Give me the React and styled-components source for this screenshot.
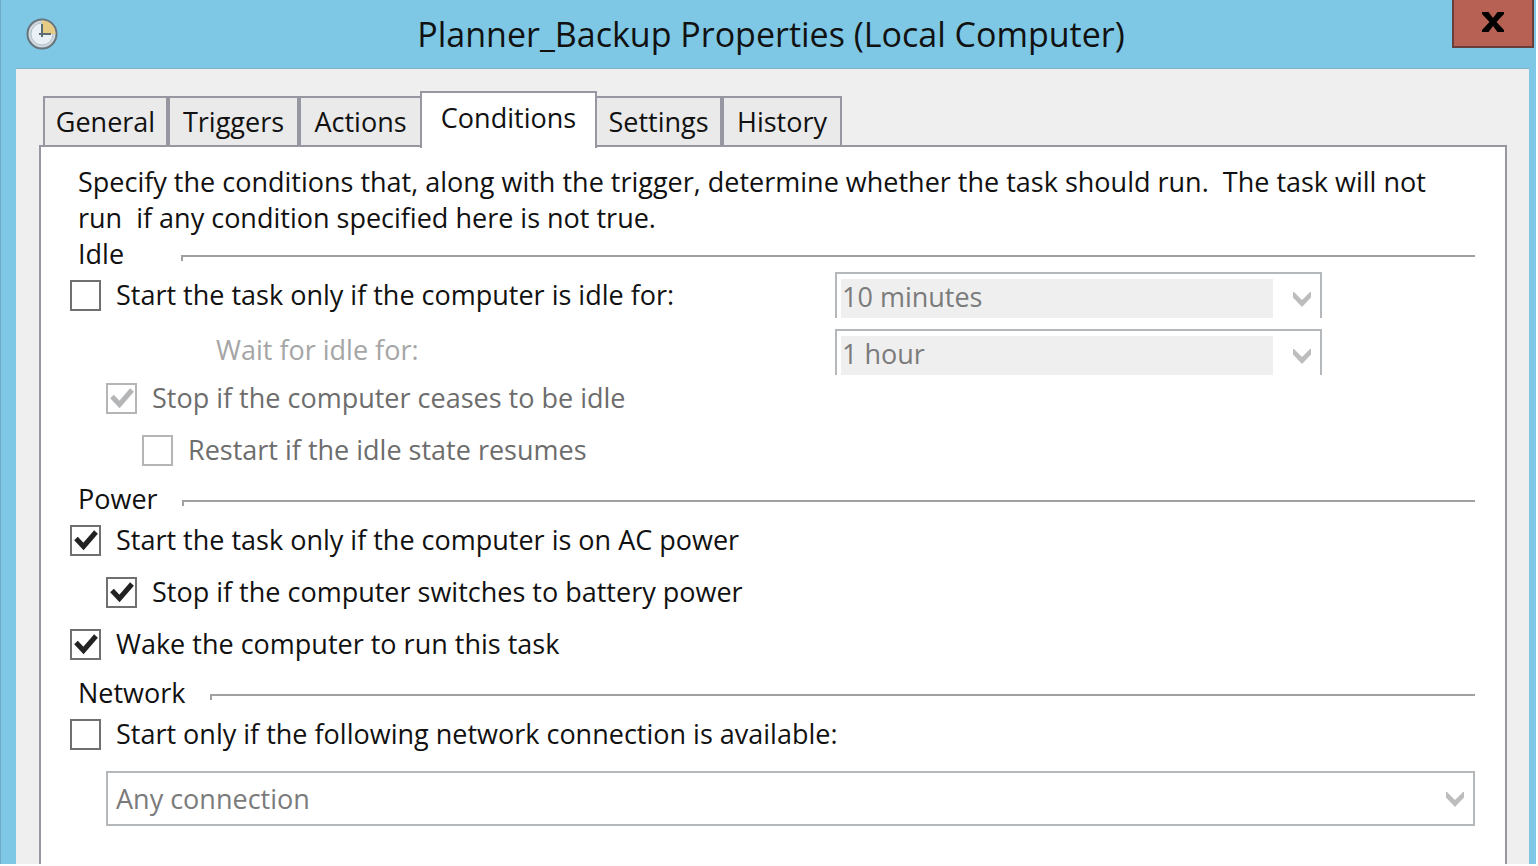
import { useState } from "react";
import styled, { createGlobalStyle } from "styled-components";

const tabs = [
    { name: "General", width: 125 },
    { name: "Triggers", width: 131 },
    { name: "Actions", width: 123 },
    { name: "Conditions", width: 177 },
    { name: "Settings", width: 127 },
    { name: "History", width: 120 },
];

function ClockIcon() {
    return (
        <svg width="32" height="32" viewBox="0 0 32 32" aria-hidden="true">
            <circle cx="16" cy="16" r="14.5" fill="#cfd8de" stroke="#68747b" strokeWidth="2" />
            <circle cx="16" cy="16" r="11" fill="#e9f1f6" stroke="#b4c0c9" strokeWidth="1" />
            <path d="M16 16V2.5A13.5 13.5 0 0 1 29.5 16Z" fill="#e6cb84" />
            <path d="M16 6V19M13 16H25" stroke="#5d6b74" strokeWidth="2" fill="none" />
        </svg>
    );
}

function CloseIcon() {
    return (
        <svg width="22" height="20" viewBox="0 0 22 20" aria-hidden="true">
            <path d="M0 0H6.500L11 6L15.500 0H22V2L14.500 10L22 18V20H15.500L11 14L6.500 20H0V18L7.500 10L0 2Z" fill="#000" />
        </svg>
    );
}

function Check({ children, level = 0, checked = false, disabled }) {
    const [on, setOn] = useState(checked);

    return (
        <CheckRow $level={level} $disabled={disabled}>
            <Box $disabled={disabled}>
                <input
                    type="checkbox"
                    checked={on}
                    disabled={disabled}
                    onChange={() => setOn(!on)}
                />
                {on && (
                    <svg width="24" height="24" viewBox="0 0 24 24" aria-hidden="true">
                        <path d="M2 10.500L9.500 18.500L22 4" fill="none" stroke="currentColor" strokeWidth="5" />
                    </svg>
                )}
            </Box>
            {children}
        </CheckRow>
    );
}

function Combo({ id, label, value, filled }) {
    return (
        <ComboWrap $filled={filled}>
            <Select id={id} aria-label={label} disabled $filled={filled}>
                <option>{value}</option>
            </Select>
            <svg width="18" height="16" viewBox="0 0 18 16" aria-hidden="true">
                <path d="M0 0H1L9 8L17 0H18V5.500L9 15L0 5.500Z" fill="#bdbdbd" />
            </svg>
        </ComboWrap>
    );
}

function App() {
    const [active, setActive] = useState("Conditions");

    return (
        <Window>
            <GlobalStyle />
            <TitleBar>
                <ClockIcon />
                <h1>Planner_Backup Properties (Local Computer)</h1>
                <CloseButton aria-label="Close">
                    <CloseIcon />
                </CloseButton>
            </TitleBar>
            <Client>
                <TabList role="tablist">
                    {tabs.map((tab) => (
                        <Tab
                            key={tab.name}
                            role="tab"
                            aria-selected={tab.name === active}
                            $active={tab.name === active}
                            $width={tab.width}
                            onClick={() => setActive(tab.name)}
                        >
                            {tab.name}
                        </Tab>
                    ))}
                </TabList>
                <Panel role="tabpanel">
                    <Intro>
                        Specify the conditions that, along with the trigger, determine whether the task should run.&nbsp; The task will not run&nbsp; if any condition specified here is not true.
                    </Intro>

                    <GroupTitle><span>Idle</span></GroupTitle>
                    <IdleGrid>
                        <Check>Start the task only if the computer is idle for:</Check>
                        <Combo label="Idle time" value="10 minutes" filled />
                        <WaitLabel htmlFor="wait">Wait for idle for:</WaitLabel>
                        <Combo id="wait" label="Wait for idle for" value="1 hour" filled />
                    </IdleGrid>
                    <Rows>
                        <Check level={1} checked disabled>Stop if the computer ceases to be idle</Check>
                        <Check level={2} disabled>Restart if the idle state resumes</Check>
                    </Rows>

                    <GroupTitle><span>Power</span></GroupTitle>
                    <Rows>
                        <Check checked>Start the task only if the computer is on AC power</Check>
                        <Check level={1} checked>Stop if the computer switches to battery power</Check>
                        <Check checked>Wake the computer to run this task</Check>
                    </Rows>

                    <GroupTitle><span>Network</span></GroupTitle>
                    <Check>Start only if the following network connection is available:</Check>
                    <NetworkRow>
                        <Combo label="Network connection" value="Any connection" />
                    </NetworkRow>
                </Panel>
            </Client>
        </Window>
    );
}

export default App;

const GlobalStyle = createGlobalStyle`
    * {
        box-sizing: border-box;
    }

    body {
        margin: 0;
        background: #fff;
        color: #111;
        font-family: "Open Sans", "Noto Sans", sans-serif;
        font-size: 27px;
        line-height: 36px;
    }

    button, select, input {
        font: inherit;
        color: inherit;
        margin: 0;
    }
`;

const Window = styled.div`
    display: flex;
    flex-direction: column;
    min-height: calc(100vh - 2px);
    margin: 0 2px 2px 0;
    padding: 0 7px 0 15px;
    border-left: 1px solid #6dacc6;
    background: #7ec8e5;
`;

const TitleBar = styled.header`
    display: grid;
    grid-template-columns: 74px 1fr 82px;
    align-items: center;
    height: 68px;
    margin-right: -5px;

    > svg {
        margin-left: 10px;
    }

    h1 {
        margin: 0;
        font-size: 34px;
        font-weight: 400;
        text-align: center;
    }
`;

const CloseButton = styled.button`
    display: grid;
    place-items: center;
    align-self: start;
    height: 48px;
    padding: 0 0 2px;
    border: 2px solid #683f3b;
    border-top: 0;
    background: #b76154;
`;

const Client = styled.main`
    display: flex;
    flex-direction: column;
    flex: 1;
    padding: 22px 22px 0 23px;
    border-top: 1px solid #82b0cb;
    background: #efefef;
`;

const TabList = styled.div`
    display: flex;
    align-items: flex-end;
    padding-left: 4px;
`;

const Tab = styled.button`
    width: ${(props) => props.$width}px;
    height: ${(props) => (props.$active ? "57px" : "49px")};
    margin: ${(props) => (props.$active ? "0 -2px -3px" : "0")};
    padding: ${(props) => (props.$active ? "0 0 6px" : "0")};
    border: 2px solid #9697a0;
    border-bottom: 0;
    background: ${(props) => (props.$active ? "#fff" : "#eaeaea")};
    z-index: ${(props) => (props.$active ? 1 : 0)};
`;

const Panel = styled.section`
    flex: 1;
    padding: 17px 30px 37px 29px;
    border: 2px solid #9697a0;
    border-bottom: 0;
    background: #fff;
`;

const Intro = styled.p`
    margin: 0 8px;
`;

const GroupTitle = styled.h2`
    display: flex;
    gap: 24px;
    margin: 0 0 0 8px;
    font-size: inherit;
    font-weight: 400;

    span {
        min-width: 79px;
    }

    &::after {
        content: "";
        flex: 1;
        height: 4px;
        margin-top: 19px;
        border-top: 2px solid #a0a0a0;
        border-left: 2px solid #a0a0a0;
    }
`;

const CheckRow = styled.label`
    display: flex;
    align-items: center;
    gap: 15px;
    height: 46px;
    padding-left: ${(props) => props.$level * 36}px;
    color: ${(props) => (props.$disabled ? "#6d6d6d" : "inherit")};
`;

const Box = styled.span`
    display: grid;
    place-items: center;
    color: ${(props) => (props.$disabled ? "#b3b5b7" : "#222")};

    input {
        grid-area: 1 / 1;
        appearance: none;
        width: 31px;
        height: 31px;
        border: 2px solid ${(props) => (props.$disabled ? "#b3b5b7" : "#707070")};
        background: #fff;
    }

    svg {
        grid-area: 1 / 1;
        pointer-events: none;
    }
`;

const IdleGrid = styled.div`
    display: grid;
    grid-template-columns: 1fr 487px;
    grid-auto-rows: 46px;
    row-gap: 11px;
    margin-right: 153px;
`;

const WaitLabel = styled.label`
    padding: 3px 0 0 146px;
    color: #a5a5a5;
`;

const Rows = styled.div`
    display: grid;
    gap: 6px;
    margin-bottom: 8px;
`;

const ComboWrap = styled.div`
    display: grid;
    align-items: center;

    > svg {
        grid-area: 1 / 1;
        justify-self: end;
        margin: ${(props) => (props.$filled ? "10px" : "2px")} 11px 0 0;
        pointer-events: none;
    }
`;

const Select = styled.select`
    grid-area: 1 / 1;
    appearance: none;
    width: 100%;
    height: ${(props) => (props.$filled ? "46px" : "55px")};
    padding: ${(props) => (props.$filled ? "2px 48px 0 5px" : "0 48px 0 8px")};
    border: 2px solid #b4b8bb;
    border-bottom-width: ${(props) => (props.$filled ? 0 : "2px")};
    border-radius: 0;
    background: ${(props) =>
        props.$filled
            ? "linear-gradient(#efefef, #efefef) 4px 5px / calc(100% - 51px) 100% no-repeat #fff"
            : "#fff"};
    color: #7b7b7b;
    opacity: 1;
`;

const NetworkRow = styled.div`
    padding: 14px 0 0 36px;
`;
